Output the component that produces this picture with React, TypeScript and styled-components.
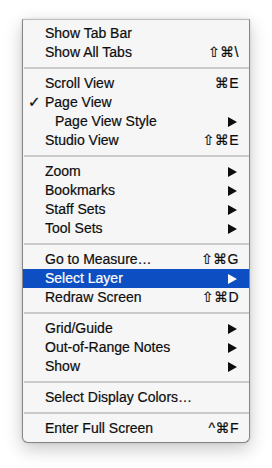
import styled, { createGlobalStyle } from "styled-components";

const GlobalStyle = createGlobalStyle`
  html, body {
    margin: 0;
    padding: 0;
    background: #ffffff;
  }
  body {
    font-family: "Liberation Sans", "DejaVu Sans", sans-serif;
  }
`;

const Page = styled.div`
  padding: 19px 0 0 22px;
  height: 468px;
  box-sizing: border-box;
`;

const Menu = styled.ul`
  list-style: none;
  margin: 0;
  padding: 4px 0;
  width: 228px;
  box-sizing: border-box;
  background: #f6f6f6;
  border: 1px solid #858585;
  border-top-color: #bdbdbd;
  border-radius: 0 0 6px 6px;
  box-shadow: 0 6px 18px rgba(0, 0, 0, 0.22), 0 0 3px rgba(0, 0, 0, 0.12);
`;

const Item = styled.li<{ $active?: boolean }>`
  display: grid;
  grid-template-columns: 22px 1fr auto;
  align-items: center;
  height: 19px;
  line-height: 19px;
  padding-right: 10px;
  font-size: 14px;
  color: ${(p) => (p.$active ? "#ffffff" : "#0d0d0d")};
  background: ${(p) => (p.$active ? "#0d4fc2" : "transparent")};
  white-space: nowrap;
  -webkit-text-stroke: 0.2px currentColor;
`;

const Check = styled.span`
  padding-left: 5px;
  font-family: "DejaVu Sans", sans-serif;
  font-size: 15px;
  font-weight: bold;
`;

const Label = styled.span<{ $indent?: boolean }>`
  padding-left: ${(p) => (p.$indent ? "10px" : "0")};
`;

const Shortcut = styled.span`
  font-family: "Liberation Sans", "DejaVu Sans", sans-serif;
  letter-spacing: 0.5px;
`;

const Arrow = styled.span<{ $active?: boolean }>`
  width: 0;
  height: 0;
  margin-right: 2px;
  border-top: 5px solid transparent;
  border-bottom: 5px solid transparent;
  border-left: 9px solid ${(p) => (p.$active ? "#ffffff" : "#0d0d0d")};
`;

const Separator = styled.li`
  height: 12px;
  display: flex;
  align-items: center;
  padding-left: 1px;

  &::after {
    content: "";
    flex: 1;
    height: 2px;
    background: #cacaca;
  }
`;

type Entry =
  | { sep: true }
  | {
      sep?: false;
      label: string;
      shortcut?: string;
      submenu?: boolean;
      checked?: boolean;
      indent?: boolean;
      active?: boolean;
    };

const entries: Entry[] = [
  { label: "Show Tab Bar" },
  { label: "Show All Tabs", shortcut: "⇧⌘\\" },
  { sep: true },
  { label: "Scroll View", shortcut: "⌘E" },
  { label: "Page View", checked: true },
  { label: "Page View Style", indent: true, submenu: true },
  { label: "Studio View", shortcut: "⇧⌘E" },
  { sep: true },
  { label: "Zoom", submenu: true },
  { label: "Bookmarks", submenu: true },
  { label: "Staff Sets", submenu: true },
  { label: "Tool Sets", submenu: true },
  { sep: true },
  { label: "Go to Measure…", shortcut: "⇧⌘G" },
  { label: "Select Layer", submenu: true, active: true },
  { label: "Redraw Screen", shortcut: "⇧⌘D" },
  { sep: true },
  { label: "Grid/Guide", submenu: true },
  { label: "Out-of-Range Notes", submenu: true },
  { label: "Show", submenu: true },
  { sep: true },
  { label: "Select Display Colors…" },
  { sep: true },
  { label: "Enter Full Screen", shortcut: "^⌘F" },
];

function App() {
  return (
    <Page>
      <GlobalStyle />
      <Menu>
        {entries.map((e, i) =>
          e.sep ? (
            <Separator key={i} />
          ) : (
            <Item key={i} $active={e.active}>
              <Check>{e.checked ? "✓" : ""}</Check>
              <Label $indent={e.indent}>{e.label}</Label>
              {e.submenu ? (
                <Arrow $active={e.active} />
              ) : (
                <Shortcut>{e.shortcut ?? ""}</Shortcut>
              )}
            </Item>
          )
        )}
      </Menu>
    </Page>
  );
}

export default App;
